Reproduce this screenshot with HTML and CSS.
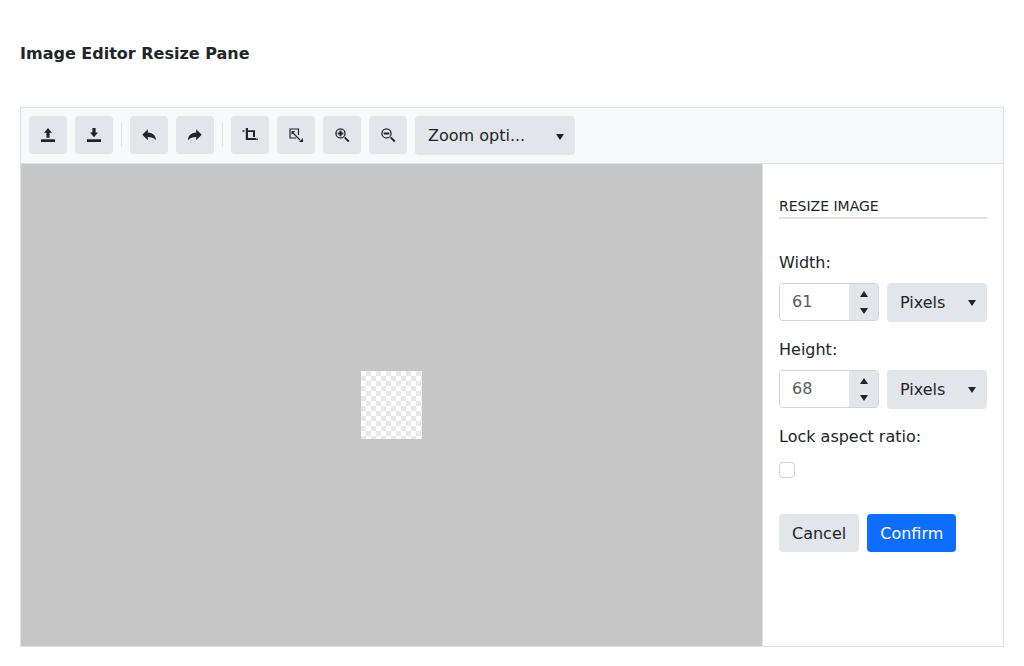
FILE: index.html
```html
<!DOCTYPE html>
<html lang="en">
  <head>
    <meta charset="UTF-8" />
    <title>Image Editor Resize Pane</title>
    <link rel="stylesheet" href="styles.css">
  </head>
  <body>
    <h1 class="page-title">Image Editor Resize Pane</h1>

    <div class="editor">
      <div class="toolbar">
        <button class="tool" type="button" aria-label="Upload">
          <svg viewBox="0 0 16 16"><path d="M1 12.300h14V15H1zM8 1l4 4.800H9.600V10.800H6.400V5.800H4z"/></svg>
        </button>
        <button class="tool" type="button" aria-label="Download">
          <svg viewBox="0 0 16 16"><path d="M1 12.300h14V15H1zM6.400 1h3.200v4.400H12l-4 4.800-4-4.800h2.400z"/></svg>
        </button>
        <span class="divider"></span>
        <button class="tool" type="button" aria-label="Undo">
          <svg viewBox="0 0 16 16"><path d="M6.800 2.300 1.300 7.800l5.500 5.500V10c3.500 0 6 .8 8.200 3.300 0-4.500-3-7.500-8.200-7.800z"/></svg>
        </button>
        <button class="tool" type="button" aria-label="Redo">
          <svg viewBox="0 0 16 16"><path d="M9.200 2.300l5.500 5.500-5.500 5.500V10c-3.500 0-6 .8-8.200 3.300 0-4.500 3-7.500 8.200-7.800z"/></svg>
        </button>
        <span class="divider"></span>
        <button class="tool" type="button" aria-label="Crop">
          <svg viewBox="0 0 16 16"><path d="M3.800 1H6v10h8v2H3.800zM6 3.200h7V10h-2V5H6zM.5 3.200h2v1.500h-2zM14.300 11.500h1.500V13h-1.500z"/></svg>
        </button>
        <button class="tool" type="button" aria-label="Resize">
          <svg viewBox="0 0 16 16"><path class="outline" d="M10.500 8V2H2v9h6M5 6l7 7"/><path d="M3.500 4h3.700L3.500 7.700zM15 15h-4l4-4z"/></svg>
        </button>
        <button class="tool" type="button" aria-label="Zoom in">
          <svg viewBox="0 0 16 16"><path fill-rule="evenodd" d="M6.500 1.200a5.200 5.200 0 1 1 0 10.400 5.200 5.200 0 0 1 0-10.400zm0 1.300a3.900 3.900 0 1 0 0 7.800 3.900 3.900 0 0 0 0-7.800z"/><path d="M5.500 3.600h2v1.800h1.800v2H7.500v1.800h-2V7.400H3.700v-2h1.800zM10 11l1.200-1.300 4.300 4-1.400 1.500z"/></svg>
        </button>
        <button class="tool" type="button" aria-label="Zoom out">
          <svg viewBox="0 0 16 16"><path fill-rule="evenodd" d="M6.500 1.200a5.200 5.200 0 1 1 0 10.400 5.200 5.200 0 0 1 0-10.400zm0 1.300a3.900 3.900 0 1 0 0 7.800 3.900 3.900 0 0 0 0-7.800z"/><path d="M3.700 5.400h5.600v2H3.700zM10 11l1.200-1.300 4.300 4-1.400 1.500z"/></svg>
        </button>
        <div class="select zoom-select">Zoom opti...</div>
      </div>

      <div class="workspace">
        <div class="canvas">
          <div class="image"></div>
        </div>

        <div class="pane">
          <h2 class="pane-title">RESIZE IMAGE</h2>

          <label class="field-label">Width:</label>
          <div class="size-row">
            <div class="spinner">
              <input class="spinner-value" type="text" value="61" />
              <div class="spinner-arrows"><span class="arrow-up"></span><span class="arrow-down"></span></div>
            </div>
            <div class="select unit-select">Pixels</div>
          </div>

          <label class="field-label">Height:</label>
          <div class="size-row">
            <div class="spinner">
              <input class="spinner-value" type="text" value="68" />
              <div class="spinner-arrows"><span class="arrow-up"></span><span class="arrow-down"></span></div>
            </div>
            <div class="select unit-select">Pixels</div>
          </div>

          <label class="field-label">Lock aspect ratio:</label>
          <div class="check-row"><input class="check" type="checkbox" /></div>

          <div class="actions">
            <button class="btn btn-light" type="button">Cancel</button>
            <button class="btn btn-primary" type="button">Confirm</button>
          </div>
        </div>
      </div>
    </div>
  </body>
</html>
```

FILE: styles.css
```css
* {
  box-sizing: border-box;
}

body {
  margin: 0;
  padding: 0 20px;
  font-family: "DejaVu Sans", sans-serif;
  font-size: 16px;
  line-height: 24px;
  color: #212529;
  background-color: #fff;
}

.page-title {
  margin: 0;
  padding: 42px 0 41px;
  font-size: 16px;
  font-weight: 700;
  line-height: 24px;
}

.editor {
  border: 1px solid #dee2e6;
  height: 540px;
  display: flex;
  flex-direction: column;
}

.toolbar {
  display: flex;
  align-items: flex-start;
  gap: 8px;
  height: 56px;
  padding: 8px;
  background-color: #f8f9fa;
  border-bottom: 1px solid #dee2e6;
}

.tool {
  width: 38px;
  height: 38px;
  padding: 0;
  border: 0;
  border-radius: 4px;
  background-color: #e2e5ea;
  color: #212529;
  display: flex;
  align-items: center;
  justify-content: center;
}

.tool svg {
  width: 16px;
  height: 16px;
  fill: #212529;
}

.tool .outline {
  fill: none;
  stroke: #212529;
  stroke-width: 1.2;
}

.divider {
  width: 1px;
  height: 24px;
  margin: 7px 0;
  background-color: #dee2e6;
}

.select {
  position: relative;
  height: 39px;
  padding: 8px 12px 7px 13px;
  border-radius: 4px;
  background-color: #e2e5ea;
}

.select::after {
  content: "";
  position: absolute;
  right: 11px;
  top: 17px;
  border-top: 6px solid #212529;
  border-left: 4px solid transparent;
  border-right: 4px solid transparent;
}

.zoom-select {
  width: 160px;
}

.zoom-select::after {
  top: 18px;
}

.unit-select {
  width: 100px;
}

.workspace {
  flex: 1;
  display: flex;
  min-height: 0;
}

.canvas {
  flex: 1;
  display: flex;
  align-items: center;
  justify-content: center;
  background-color: #c6c6c6;
}

.image {
  width: 61px;
  height: 68px;
  background: conic-gradient(#e8e8e8 25%, #fff 0 50%, #e8e8e8 0 75%, #fff 0) 0 0 / 10px 10px;
}

.pane {
  width: 241px;
  padding: 32px 16px 0;
  border-left: 1px solid #dee2e6;
}

.pane-title {
  margin: 0 0 32px;
  font-size: 14px;
  font-weight: 400;
  line-height: 21px;
  border-bottom: 2px solid #dee2e6;
}

.field-label {
  display: block;
  margin-bottom: 8px;
}

.size-row {
  display: flex;
  gap: 8px;
  margin-bottom: 16px;
}

.spinner {
  display: flex;
  width: 100px;
  height: 38px;
  border: 1px solid #ced4da;
  border-radius: 4px;
  overflow: hidden;
}

.spinner-value {
  width: 69px;
  padding: 0 12px;
  border: 0;
  outline: none;
  font: inherit;
  color: #565c62;
}

.spinner-arrows {
  flex: 1;
  display: flex;
  flex-direction: column;
  align-items: center;
  justify-content: center;
  gap: 11px;
  background-color: #e2e5ea;
}

.arrow-up {
  border-bottom: 6px solid #212529;
  border-left: 4px solid transparent;
  border-right: 4px solid transparent;
}

.arrow-down {
  border-top: 6px solid #212529;
  border-left: 4px solid transparent;
  border-right: 4px solid transparent;
}

.check-row {
  height: 25px;
  padding-top: 1px;
  display: flex;
  align-items: center;
}

.check {
  appearance: none;
  width: 16px;
  height: 16px;
  margin: 0;
  border: 1px solid #ced4da;
  border-radius: 4px;
  background-color: #fff;
}

.actions {
  display: flex;
  gap: 8px;
  margin-top: 32px;
}

.btn {
  height: 38px;
  padding: 1px 13px 0;
  border: 0;
  border-radius: 4px;
  font: inherit;
}

.btn-light {
  background-color: #e2e5ea;
  color: #212529;
}

.btn-primary {
  background-color: #0d6efd;
  color: #fff;
}
```
